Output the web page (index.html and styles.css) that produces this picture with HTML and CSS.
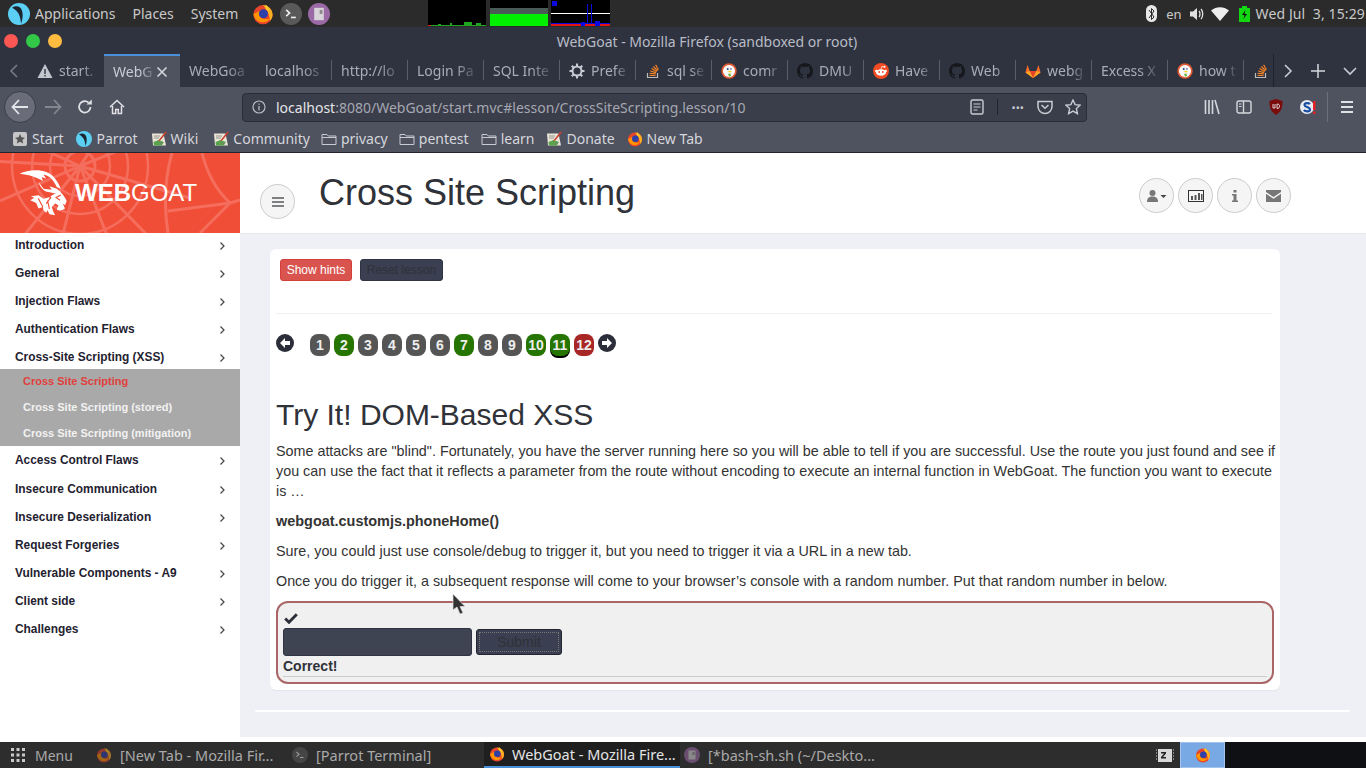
FILE: index.html
```html
<!DOCTYPE html>
<html lang="en">
<head>
    <meta charset="UTF-8">
    <title>WebGoat - Mozilla Firefox</title>
    <link rel="stylesheet" href="styles.css">
</head>
<body>
    <!-- shared icons -->
    <svg class="defs" width="0" height="0">
        <symbol id="i-firefox" viewBox="0 0 16 16">
            <circle cx="8" cy="8.5" r="7" fill="#e8452c"/>
            <path d="M8 1.5a7 7 0 0 1 7 7c0 2-1 3.500-2 4.500 0-5-3-9-5-11.500z" fill="#ffb01f"/>
            <path d="M1 8c1 4 4 6.500 8 6 2-.3 3-1.500 4-3-2 1-5 1-6.500-.5S5 6 7 5z" fill="#ff9500"/>
            <circle cx="8.300" cy="7.800" r="3.300" fill="#2d3fa8"/>
            <path d="M10 1c1 1 2.500 3 3 5l-3-1.500z" fill="#ffcb2e"/>
        </symbol>
        <symbol id="i-parrot" viewBox="0 0 16 16">
            <circle cx="8" cy="8" r="8" fill="#5bd0f4"/>
            <path d="M3 3.500C6 1.500 9 2.500 10 5c1 2.500 1 6-.5 10C9 10 8 6 3 3.500z" fill="#1c2530"/>
        </symbol>
        <symbol id="i-terminal" viewBox="0 0 16 16">
            <circle cx="8" cy="8" r="8" fill="#595959"/>
            <path d="M4.500 5l2.500 2.300-2.500 2.300" fill="none" stroke="#eee" stroke-width="1.200"/>
            <path d="M8 10.500h3.500" stroke="#eee" stroke-width="1.200"/>
        </symbol>
        <symbol id="i-notes" viewBox="0 0 16 16">
            <circle cx="8" cy="8" r="8" fill="#9b6aa6"/>
            <path d="M4.500 3.500h7v9h-7z" fill="#d9d3da"/>
            <path d="M8.500 5h2v3h-2z" fill="#8d8a90"/>
        </symbol>
        <symbol id="i-duck" viewBox="0 0 16 16">
            <circle cx="8" cy="8" r="7.700" fill="#de5833"/>
            <circle cx="8" cy="8" r="6" fill="#fff"/>
            <path d="M5.500 3.500c2-1 4-.5 4.500 1.500l.5 4 .5 4.500-3 1-1-5z" fill="#f4f1ec"/>
            <circle cx="6.700" cy="6" r="1" fill="#2d4f8e"/>
            <circle cx="10" cy="6" r=".8" fill="#2d4f8e"/>
            <path d="M6.500 8h4.500l-2 1.500z" fill="#fdd20a"/>
            <path d="M7 11l2.500-.5.5 2.500-2 .5z" fill="#65bc46"/>
        </symbol>
        <symbol id="i-github" viewBox="0 0 16 16">
            <path fill="#16181d" d="M8 0C3.580 0 0 3.580 0 8c0 3.540 2.290 6.530 5.470 7.590.4.070.55-.17.55-.38 0-.19-.01-.82-.01-1.490-2.010.37-2.530-.49-2.690-.94-.09-.23-.48-.94-.82-1.130-.28-.15-.68-.52-.01-.53.63-.01 1.080.58 1.230.82.720 1.210 1.870.87 2.330.66.070-.52.28-.87.51-1.070-1.780-.2-3.640-.89-3.640-3.950 0-.87.31-1.590.82-2.150-.08-.2-.36-1.020.08-2.120 0 0 .67-.21 2.200.82.64-.18 1.320-.27 2-.27.68 0 1.360.09 2 .27 1.530-1.040 2.200-.82 2.200-.82.44 1.100.16 1.920.08 2.120.51.56.82 1.270.82 2.150 0 3.070-1.870 3.750-3.650 3.950.29.25.54.73.54 1.480 0 1.070-.01 1.930-.01 2.200 0 .21.15.46.55.38A8.013 8.013 0 0016 8c0-4.420-3.580-8-8-8z"/>
        </symbol>
        <symbol id="i-reddit" viewBox="0 0 16 16">
            <circle cx="8" cy="8" r="8" fill="#f04b23"/>
            <ellipse cx="8" cy="9.500" rx="5" ry="3.300" fill="#fff"/>
            <circle cx="3.300" cy="8" r="1.200" fill="#fff"/>
            <circle cx="12.700" cy="8" r="1.200" fill="#fff"/>
            <circle cx="11.500" cy="3.800" r="1" fill="#fff"/>
            <path d="M8 6.500l.8-3 2.500.4" fill="none" stroke="#fff" stroke-width=".7"/>
            <circle cx="6.200" cy="9" r=".9" fill="#f04b23"/>
            <circle cx="9.800" cy="9" r=".9" fill="#f04b23"/>
        </symbol>
        <symbol id="i-gitlab" viewBox="0 0 16 16">
            <path d="M8 15L.500 9.500 2.500 2l2.200 6h6.600l2.200-6 2 7.500z" fill="#fc6d26"/>
            <path d="M8 15L4.700 8h6.600z" fill="#e24329"/>
            <path d="M8 15L.500 9.500 4.700 8zM8 15l7.500-5.500L11.300 8z" fill="#fca326"/>
        </symbol>
        <symbol id="i-stack" viewBox="0 0 16 16">
            <path d="M2.500 10v4.500h10V10" fill="none" stroke="#bcbbbb" stroke-width="1.200"/>
            <path d="M4.500 12.500h6M4.700 10.300l6 .6M5.300 8l5.800 1.600M6.500 5.600l5.200 3M8.300 3.500l4.300 4.200M10.600 1.700l2.800 5" fill="none" stroke="#f48024" stroke-width="1.200"/>
        </symbol>
        <symbol id="i-wiki" viewBox="0 0 16 16">
            <path d="M1 2.500h11.500l2.500 12H2z" fill="#e9e6d8"/>
            <path d="M2.500 11l5-2 5.500 2-2.500 3.500H3z" fill="#58a34b"/>
            <path d="M3 5h6M3 7h5M9 12l3 1" stroke="#7b7b7b" stroke-width=".8"/>
            <path d="M14.500 .5L8.500 8l-1.500 2.500 2.500-1.300L15.800 1.500z" fill="#c8402f"/>
        </symbol>
        <symbol id="i-folder" viewBox="0 0 16 16">
            <path d="M1 3.500h5l1.300 1.500H15v8.500H1z" fill="#50535f" stroke="#c9cbd2" stroke-width="1"/>
            <path d="M1 6.500h14" stroke="#c9cbd2" stroke-width="1"/>
        </symbol>
        <symbol id="i-chev" viewBox="0 0 8 10">
            <path d="M2.500 1.500L6 5 2.500 8.500" fill="none" stroke="#444" stroke-width="1.200"/>
        </symbol>
    </svg>

    <!-- desktop top panel -->
    <div class="panel">
        <svg class="panel-logo"><use href="#i-parrot"/></svg>
        <span class="panel-item">Applications</span>
        <span class="panel-item">Places</span>
        <span class="panel-item">System</span>
        <svg class="launcher launcher-first"><use href="#i-firefox"/></svg>
        <svg class="launcher"><use href="#i-terminal"/></svg>
        <svg class="launcher"><use href="#i-notes"/></svg>
        <div class="monitors">
            <svg class="monitor" viewBox="0 0 58 26">
                <rect width="58" height="26" fill="#000"/>
                <path d="M0 25h58v1H0zM10 24h3v1h-3zM22 23h2v2h-2zM36 22h8v3h-8zM48 23h5v2h-5z" fill="#1fa51f"/>
                <path d="M0 25h3v1H0z" fill="#d22"/>
            </svg>
            <svg class="monitor monitor-mem" viewBox="0 0 58 26">
                <rect width="58" height="26" fill="#000"/>
                <rect y="8" width="58" height="6" fill="#4a5a56"/>
                <rect y="14" width="58" height="12" fill="#00f000"/>
            </svg>
            <svg class="monitor monitor-net" viewBox="0 0 59 26">
                <rect width="59" height="26" fill="#000"/>
                <rect x="1" y="1" width="5" height="5" fill="#0a0adf"/>
                <rect y="13" width="59" height="1" fill="#fff"/>
                <path d="M36 4h1v19h-1zM40 4h1v19h-1zM0 23h59v1H0z" fill="#0a0adf"/>
                <rect y="24" width="59" height="2" fill="#e01414"/>
                <path d="M30 22h4v4h-4zM44 21h5v5h-5z" fill="#0a0adf"/>
            </svg>
        </div>
        <div class="panel-right">
            <svg class="tray" width="12" height="18" viewBox="0 0 12 18">
                <rect width="11" height="17" rx="5.500" fill="#e8e8e8"/>
                <path d="M3 5l5 7-2.500 2.500v-11L8 6l-5 7" fill="none" stroke="#2b2b2b"/>
            </svg>
            <span class="tray-text">en</span>
            <svg class="tray" width="16" height="16" viewBox="0 0 16 16">
                <path d="M1 5.500h3L8 2v12l-4-3.500H1z" fill="#e2e2e2"/>
                <path d="M10 5c1.300 1.500 1.300 4.500 0 6M12 3c2.300 2.500 2.300 7.500 0 10" fill="none" stroke="#e2e2e2" stroke-width="1.300"/>
            </svg>
            <svg class="tray tray-wifi" width="18" height="14" viewBox="0 0 18 14">
                <path d="M0 3.500C5-1 13-1 18 3.500L9 14z" fill="#eee"/>
            </svg>
            <svg class="tray tray-batt" width="11" height="16" viewBox="0 0 11 16">
                <path d="M3 0h5v2h3v14H0V2h3z" fill="#12d812"/>
                <path d="M6.500 4L3 9h2.500l-1 4L8 8H5.500z" fill="#111"/>
            </svg>
            <span class="clock">Wed Jul &nbsp;3, 15:29</span>
        </div>
    </div>

    <!-- firefox chrome -->
    <div class="titlebar">
        <span class="wm-dot wm-red"></span>
        <span class="wm-dot wm-green"></span>
        <span class="wm-dot wm-yellow"></span>
        <span class="window-title">WebGoat - Mozilla Firefox (sandboxed or root)</span>
    </div>

    <div class="tabbar">
        <span class="tab-arrow">
            <svg width="10" height="14" viewBox="0 0 10 14"><path d="M8 1L2 7l6 6" fill="none" stroke="#777b88" stroke-width="1.600"/></svg>
        </span>
        <div class="tab tab-first">
            <svg class="tab-icon" viewBox="0 0 16 16"><path d="M8 1l7.500 14H.5z" fill="#c4c6cd"/><path d="M7.300 6h1.400v5H7.300zM7.300 12h1.400v1.400H7.300z" fill="#2f3340"/></svg>
            <span class="tab-label">start.</span>
        </div>
        <div class="tab tab-active">
            <span class="tab-label">WebG</span>
            <svg class="tab-close" width="12" height="12" viewBox="0 0 12 12"><path d="M1.500 1.500l9 9M10.500 1.500l-9 9" stroke="#d5d7dc" stroke-width="1.600"/></svg>
        </div>
        <div class="tab tab-noline"><span class="tab-label">WebGoa</span></div>
        <div class="tab"><span class="tab-label">localhos</span></div>
        <div class="tab"><span class="tab-label">http://lo</span></div>
        <div class="tab"><span class="tab-label">Login Pa</span></div>
        <div class="tab"><span class="tab-label">SQL Inte</span></div>
        <div class="tab">
            <svg class="tab-icon" viewBox="0 0 16 16"><circle cx="8" cy="8" r="4.500" fill="none" stroke="#c9cbd2" stroke-width="2"/><path d="M8 .5v3M8 12.500v3M.5 8h3M12.500 8h3M2.700 2.700l2.100 2.100M11.200 11.200l2.100 2.100M13.300 2.700l-2.100 2.100M4.800 11.200l-2.100 2.100" stroke="#c9cbd2" stroke-width="2"/></svg>
            <span class="tab-label">Prefe</span>
        </div>
        <div class="tab"><svg class="tab-icon"><use href="#i-stack"/></svg><span class="tab-label">sql se</span></div>
        <div class="tab"><svg class="tab-icon"><use href="#i-duck"/></svg><span class="tab-label">comr</span></div>
        <div class="tab"><svg class="tab-icon"><use href="#i-github"/></svg><span class="tab-label">DMU</span></div>
        <div class="tab"><svg class="tab-icon"><use href="#i-reddit"/></svg><span class="tab-label">Have</span></div>
        <div class="tab"><svg class="tab-icon"><use href="#i-github"/></svg><span class="tab-label">Web</span></div>
        <div class="tab"><svg class="tab-icon"><use href="#i-gitlab"/></svg><span class="tab-label">webg</span></div>
        <div class="tab"><span class="tab-label">Excess X</span></div>
        <div class="tab"><svg class="tab-icon"><use href="#i-duck"/></svg><span class="tab-label">how t</span></div>
        <div class="tab tab-cut"><svg class="tab-icon"><use href="#i-stack"/></svg></div>
        <div class="tab-tools">
            <svg width="10" height="14" viewBox="0 0 10 14"><path d="M2 1l6 6-6 6" fill="none" stroke="#c9cbd2" stroke-width="1.600"/></svg>
            <svg width="14" height="14" viewBox="0 0 14 14"><path d="M7 0v14M0 7h14" stroke="#d5d7dc" stroke-width="1.500"/></svg>
            <svg width="14" height="10" viewBox="0 0 14 10"><path d="M1 2l6 6 6-6" fill="none" stroke="#c9cbd2" stroke-width="1.600"/></svg>
        </div>
    </div>

    <div class="navbar">
        <span class="back-btn">
            <svg width="18" height="16" viewBox="0 0 18 16"><path d="M8 1L1.500 8 8 15M2 8h15" fill="none" stroke="#e4e5e8" stroke-width="1.800"/></svg>
        </span>
        <svg class="nav-icon nav-forward" width="18" height="16" viewBox="0 0 18 16"><path d="M10 1l6.500 7L10 15M16 8H1" fill="none" stroke="#84868f" stroke-width="1.800"/></svg>
        <svg class="nav-icon nav-reload" width="16" height="16" viewBox="0 0 16 16"><path d="M13.500 8A5.700 5.700 0 1 1 11.500 3.500" fill="none" stroke="#e0e1e5" stroke-width="1.800"/><path d="M9.500 5.500h5.300V.5z" fill="#e0e1e5"/></svg>
        <svg class="nav-icon nav-home" width="16" height="16" viewBox="0 0 16 16"><path d="M1 8l7-6.500L15 8M3.500 7v7.500h3.200v-4h2.600v4h3.200V7" fill="none" stroke="#e0e1e5" stroke-width="1.500"/></svg>
        <div class="urlbar">
            <svg class="url-info" width="14" height="14" viewBox="0 0 14 14"><circle cx="7" cy="7" r="6" fill="none" stroke="#b9bbc2" stroke-width="1.200"/><path d="M7 6v4.500M7 3.500v1.300" stroke="#b9bbc2" stroke-width="1.300"/></svg>
            <span class="url"><b>localhost</b>:8080/WebGoat/start.mvc#lesson/CrossSiteScripting.lesson/10</span>
            <svg class="url-tool" width="14" height="16" viewBox="0 0 14 16"><rect x="1" y="1" width="12" height="14" rx="1.500" fill="none" stroke="#c9cbd2" stroke-width="1.400"/><path d="M3.500 5h7M3.500 8h7M3.500 11h4" stroke="#c9cbd2" stroke-width="1.200"/></svg>
            <span class="url-sep"></span>
            <span class="url-dots">•••</span>
            <svg class="url-tool" width="16" height="16" viewBox="0 0 16 16"><path d="M1 2.500h14v5a7 7 0 0 1-14 0z" fill="none" stroke="#c9cbd2" stroke-width="1.500"/><path d="M4.500 6l3.500 3.300L11.500 6" fill="none" stroke="#c9cbd2" stroke-width="1.500"/></svg>
            <svg class="url-tool" width="16" height="16" viewBox="0 0 16 16"><path d="M8 1l2.100 4.600 5 .6-3.700 3.400 1 5L8 12.100 3.600 14.600l1-5L.9 6.200l5-.6z" fill="none" stroke="#c9cbd2" stroke-width="1.400"/></svg>
        </div>
        <div class="nav-right">
            <svg width="16" height="16" viewBox="0 0 16 16"><path d="M1.500 1v14M5 1v14M8.500 1v14M11 1l4 14" stroke="#d5d7dc" stroke-width="1.600"/></svg>
            <svg width="16" height="16" viewBox="0 0 16 16"><rect x="1" y="2" width="14" height="12" rx="2" fill="none" stroke="#d5d7dc" stroke-width="1.400"/><path d="M7.500 2v12" stroke="#d5d7dc" stroke-width="1.400"/><path d="M3 5h2.500M3 7.500h2.500" stroke="#d5d7dc"/></svg>
            <svg width="16" height="16" viewBox="0 0 16 16"><path d="M8 0l6.500 2c.3 6.500-1.500 11-6.500 14C3 13 1.200 8.500 1.500 2z" fill="#7a0c0c"/><path d="M5 5v4h2V5M9 5v4.500c2 0 2.500-1 2.500-2.300S11 5 9 5z" fill="none" stroke="#e8e8e8" stroke-width=".9"/></svg>
            <svg width="16" height="16" viewBox="0 0 16 16"><circle cx="7" cy="8" r="7" fill="#e9edf3"/><path d="M10 5C8.500 3.500 4.500 3.800 4.500 6S10 8 10 10.500 5.500 13 3.800 11" fill="none" stroke="#1c4fa3" stroke-width="2.200"/><path d="M13 2h2.500v9H13zM13 12.500h2.500V15H13z" fill="#e8202a"/></svg>
            <span class="nav-sep"></span>
            <svg width="14" height="14" viewBox="0 0 14 14"><path d="M1 2h12M1 7h12M1 12h12" stroke="#e0e1e5" stroke-width="1.800"/></svg>
        </div>
    </div>

    <div class="bookmarks">
        <span class="bookmark">
            <svg class="bm-icon" viewBox="0 0 16 16"><rect x="1" y="1" width="14" height="14" rx="2" fill="#c7c7c7"/><path d="M8 3l1.500 3.300 3.500.4-2.600 2.400.8 3.500L8 10.800l-3.200 1.800.8-3.500L3 6.700l3.500-.4z" fill="#555"/></svg>Start
        </span>
        <span class="bookmark"><svg class="bm-icon"><use href="#i-parrot"/></svg>Parrot</span>
        <span class="bookmark"><svg class="bm-icon"><use href="#i-wiki"/></svg>Wiki</span>
        <span class="bookmark bm-wide"><svg class="bm-icon"><use href="#i-wiki"/></svg>Community</span>
        <span class="bookmark bm-folder"><svg class="bm-icon"><use href="#i-folder"/></svg>privacy</span>
        <span class="bookmark bm-folder"><svg class="bm-icon"><use href="#i-folder"/></svg>pentest</span>
        <span class="bookmark bm-tight"><svg class="bm-icon"><use href="#i-folder"/></svg>learn</span>
        <span class="bookmark bm-tight"><svg class="bm-icon"><use href="#i-wiki"/></svg>Donate</span>
        <span class="bookmark bm-tight"><svg class="bm-icon"><use href="#i-firefox"/></svg>New Tab</span>
    </div>

    <!-- WebGoat page -->
    <div class="page">
        <aside class="sidebar">
            <div class="brand">
                <svg class="brand-web" viewBox="0 0 240 80">
                    <g fill="none" stroke="#f56e5d">
                        <circle cx="80" cy="13" r="15" stroke-width="3"/>
                        <circle cx="80" cy="13" r="30" stroke-width="2.500"/>
                        <circle cx="80" cy="13" r="48" stroke-width="2.500"/>
                        <circle cx="80" cy="13" r="68" stroke-width="2.500"/>
                        <path stroke-width="3" d="M80 13L-10 8M80 13L0 48M80 13L22 85M80 13L62 85M80 13l28 72M80 13l70 72M80 13L190 45M80 13L125-5M80 13L92-5M80 13L40-5"/>
                        <path stroke-width="3" d="M172 0c-8 28-8 55-4 80M202 0c5 20 15 38 28 50M230 50l10-3M230 50l-30 30M230 50l-62 8"/>
                    </g>
                </svg>
                <svg class="brand-goat" width="53" height="50" viewBox="20 40 160 150">
                    <path fill="#fff" d="M28 60C50 48 85 45 110 55c20 7 35 30 42 50l-12-5c-10-25-25-35-40-38l8 13-13-5 3 12-13-7C70 68 50 62 28 60z"/>
                    <path fill="#fff" d="M85 85l15 20 25 3-7-10 22 7c15 10 25 25 30 37l-5 13-7-5 7 15c-10 7-20 7-25 3l5-13-10-5-10 10 5 15 5 10-17-3-6-12-4 8-8-8-2-10-13 5-7-17-18-8 12-8-10-4 23-3 15 10 20-5c5-5 15-12 20-10l-25-5c-15 0-25-15-30-30z"/>
                    <path fill="none" stroke="#f04e37" stroke-width="3.500" d="M100 118l22 14-14 18M84 134l14 26M112 140l6 26M152 124l-14 8 12 8"/>
                </svg>
                <span class="brand-name"><b>WEB</b>GOAT</span>
            </div>
            <nav class="menu">
                <a class="menu-item menu-first">Introduction<svg class="chev"><use href="#i-chev"/></svg></a>
                <a class="menu-item">General<svg class="chev"><use href="#i-chev"/></svg></a>
                <a class="menu-item">Injection Flaws<svg class="chev"><use href="#i-chev"/></svg></a>
                <a class="menu-item">Authentication Flaws<svg class="chev"><use href="#i-chev"/></svg></a>
                <a class="menu-item menu-open">Cross-Site Scripting (XSS)<svg class="chev"><use href="#i-chev"/></svg></a>
                <div class="submenu">
                    <a class="sub-item sub-current">Cross Site Scripting</a>
                    <a class="sub-item">Cross Site Scripting (stored)</a>
                    <a class="sub-item">Cross Site Scripting (mitigation)</a>
                </div>
                <a class="menu-item menu-after">Access Control Flaws<svg class="chev"><use href="#i-chev"/></svg></a>
                <a class="menu-item">Insecure Communication<svg class="chev"><use href="#i-chev"/></svg></a>
                <a class="menu-item">Insecure Deserialization<svg class="chev"><use href="#i-chev"/></svg></a>
                <a class="menu-item">Request Forgeries<svg class="chev"><use href="#i-chev"/></svg></a>
                <a class="menu-item">Vulnerable Components - A9<svg class="chev"><use href="#i-chev"/></svg></a>
                <a class="menu-item">Client side<svg class="chev"><use href="#i-chev"/></svg></a>
                <a class="menu-item">Challenges<svg class="chev"><use href="#i-chev"/></svg></a>
            </nav>
        </aside>

        <section class="content">
            <header class="top">
                <button class="round toggle">
                    <svg width="12" height="10" viewBox="0 0 12 10"><path d="M0 1h12M0 5h12M0 9h12" stroke="#58595b" stroke-width="1.700"/></svg>
                </button>
                <h1>Cross Site Scripting</h1>
                <div class="top-actions">
                    <button class="round">
                        <svg width="20" height="12" viewBox="0 0 20 12"><circle cx="5.500" cy="3" r="3" fill="#777"/><path d="M0 12c0-4 2-5.500 5.500-5.500S11 8 11 12z" fill="#777"/><path d="M13.500 5h6l-3 3z" fill="#444"/></svg>
                    </button>
                    <button class="round">
                        <svg width="16" height="12" viewBox="0 0 16 12"><rect x=".5" y=".5" width="15" height="11" fill="none" stroke="#333"/><path d="M3 6h2v4H3zM6.500 5h2v5h-2zM10 3h2v7h-2zM13 4h1.500v6H13z" fill="#555"/></svg>
                    </button>
                    <button class="round">
                        <svg width="6" height="12" viewBox="0 0 6 12"><path d="M1.500 0h3v2.500h-3zM0 4h4.500v6.500H6V12H0v-1.500h1.500v-5H0z" fill="#777"/></svg>
                    </button>
                    <button class="round">
                        <svg width="15" height="12" viewBox="0 0 15 12"><path d="M0 0h15v2L7.500 7 0 2zM0 3.800l7.500 5 7.500-5V12H0z" fill="#777"/></svg>
                    </button>
                </div>
            </header>

            <main class="main">
                <div class="card">
                    <div class="lesson-btns">
                        <button class="btn btn-hints">Show hints</button>
                        <button class="btn btn-reset">Reset lesson</button>
                    </div>
                    <div class="pager">
                        <svg class="arrow" width="18" height="18" viewBox="0 0 18 18"><circle cx="9" cy="9" r="9" fill="#2b2e38"/><path d="M9 4L4 9l5 5V11h5V7H9z" fill="#fff"/></svg>
                        <div class="pages">
                            <span class="pg">1</span>
                            <span class="pg pg-done">2</span>
                            <span class="pg">3</span>
                            <span class="pg">4</span>
                            <span class="pg">5</span>
                            <span class="pg">6</span>
                            <span class="pg pg-done">7</span>
                            <span class="pg">8</span>
                            <span class="pg">9</span>
                            <span class="pg pg-done">10</span>
                            <span class="pg pg-done pg-current">11</span>
                            <span class="pg pg-fail">12</span>
                        </div>
                        <svg class="arrow arrow-next" width="18" height="18" viewBox="0 0 18 18"><circle cx="9" cy="9" r="9" fill="#2b2e38"/><path d="M9 4l5 5-5 5V11H4V7h5z" fill="#fff"/></svg>
                    </div>

                    <h2>Try It! DOM-Based XSS</h2>
                    <p>Some attacks are "blind". Fortunately, you have the server running here so you will be able to tell if you are successful. Use the route you just found and see if you can use the fact that it reflects a parameter from the route without encoding to execute an internal function in WebGoat. The function you want to execute is …</p>
                    <p class="fn-name"><b>webgoat.customjs.phoneHome()</b></p>
                    <p>Sure, you could just use console/debug to trigger it, but you need to trigger it via a URL in a new tab.</p>
                    <p>Once you do trigger it, a subsequent response will come to your browser’s console with a random number. Put that random number in below.</p>

                    <div class="attack">
                        <svg class="check" width="14" height="11" viewBox="0 0 14 11"><path d="M1.200 5.500l3.800 3.800 7.800-8" fill="none" stroke="#2b2e38" stroke-width="2.800"/></svg>
                        <form class="attack-form">
                            <input class="answer" type="text">
                            <button class="submit" type="button"><span class="submit-focus">Submit</span></button>
                        </form>
                        <div class="feedback">Correct!</div>
                    </div>
                </div>
                <div class="page-rule"></div>
            </main>
        </section>
    </div>

    <!-- desktop taskbar -->
    <div class="taskbar">
        <svg class="menu-grid" width="14" height="14" viewBox="0 0 14 14" fill="#c9c9c9">
            <path d="M0 0h3v3H0zM5.500 0h3v3h-3zM11 0h3v3h-3zM0 5.500h3v3H0zM5.500 5.500h3v3h-3zM11 5.500h3v3h-3zM0 11h3v3H0zM5.500 11h3v3h-3zM11 11h3v3h-3z"/>
        </svg>
        <span class="task-menu">Menu</span>
        <span class="task task-ff"><svg class="task-icon dim"><use href="#i-firefox"/></svg>[New Tab - Mozilla Fir...</span>
        <span class="task task-term"><svg class="task-icon dim"><use href="#i-terminal"/></svg>[Parrot Terminal]</span>
        <span class="task task-active"><svg class="task-icon"><use href="#i-firefox"/></svg>WebGoat - Mozilla Fire...</span>
        <span class="task task-notes"><svg class="task-icon dim"><use href="#i-notes"/></svg>[*bash-sh.sh (~/Deskto...</span>
        <svg class="sleep" width="18" height="18" viewBox="0 0 18 18"><rect x="2" y="3" width="14" height="13" fill="#d8d8d8"/><path d="M0 3v12M18 3v12" stroke="#d8d8d8" stroke-dasharray="2 1"/><path d="M5 6h5v1.500L7 11h3v1.500H5V11l3-3.500H5z" fill="#222"/></svg>
        <span class="show-ff"><svg class="task-icon"><use href="#i-firefox"/></svg></span>
        <span class="task-end"></span>
    </div>

    <!-- mouse pointer -->
    <svg class="pointer" width="14" height="22" viewBox="0 0 14 22">
        <path d="M1 1v16l4-3 3 7 3-1-3-6.500h5z" fill="#333" stroke="#ddd" stroke-width=".7"/>
    </svg>
</body>
</html>
```
FILE: styles.css
```css
* {
    box-sizing: border-box;
}

body {
    margin: 0;
    width: 1366px;
    height: 768px;
    overflow: hidden;
    display: flex;
    flex-direction: column;
    position: relative;
    font-family: "Liberation Sans", Arial, sans-serif;
    font-size: 14px;
    color: #333;
    background-color: #fff;
}

.defs {
    position: absolute;
}

/* Desktop top panel */
.panel {
    height: 27px;
    flex: none;
    display: flex;
    align-items: center;
    padding-left: 8px;
    background-color: #2b2b2b;
    color: #c9c9c9;
    font-family: "Noto Sans", sans-serif;
    font-size: 14px;
}

.panel-logo {
    width: 22px;
    height: 22px;
    margin-right: 5px;
}

.panel-item {
    margin-right: 17px;
}

.launcher {
    width: 22px;
    height: 22px;
    margin-right: 6px;
}

.launcher-first {
    margin-left: -3px;
}

.monitors {
    display: flex;
    gap: 4px;
    margin-left: 92px;
    align-self: flex-start;
}

.monitor {
    width: 58px;
    height: 26px;
    display: block;
}

.monitor-net {
    width: 59px;
    margin-left: -1px;
}

.panel-right {
    margin-left: auto;
    display: flex;
    align-items: center;
    padding-right: 1px;
}

.tray-text {
    margin: 0 7px 0 8px;
    font-size: 13px;
}

.tray-wifi {
    margin: 0 10px 0 6px;
}

.tray-batt {
    margin-right: 6px;
}

.clock {
    letter-spacing: .12px;
}

/* Firefox title bar and tabs */
.titlebar {
    height: 27px;
    flex: none;
    display: flex;
    align-items: center;
    gap: 8px;
    padding-left: 4px;
    position: relative;
    background-color: #2f3340;
}

.wm-dot {
    width: 14px;
    height: 14px;
    border-radius: 50%;
}

.wm-red {
    background-color: #fc5753;
}

.wm-green {
    background-color: #33c748;
}

.wm-yellow {
    background-color: #fdbc40;
}

.window-title {
    position: absolute;
    left: 48px;
    right: 0;
    top: 5px;
    text-align: center;
    color: #b9bcc6;
    font-family: "Noto Sans", sans-serif;
    font-size: 14px;
}

.tabbar {
    height: 33px;
    flex: none;
    display: flex;
    align-items: stretch;
    background-color: #2f3340;
    color: #a9acb7;
    font-family: "Noto Sans", sans-serif;
    font-size: 14px;
}

.tab-arrow {
    width: 28px;
    display: flex;
    align-items: center;
    justify-content: center;
}

.tab {
    width: 76px;
    flex: none;
    display: flex;
    align-items: center;
    padding: 0 8px 0 9px;
    position: relative;
    overflow: hidden;
}

.tab::after {
    content: "";
    position: absolute;
    right: 0;
    top: 6px;
    bottom: 7px;
    width: 1px;
    background-color: #5b5e6a;
}

.tab-first::after,
.tab-active::after,
.tab-noline::after {
    display: none;
}

.tab-active {
    background-color: #4f525f;
    border-top: 2px solid #4a90d9;
    padding-right: 12px;
    color: #c9ccd4;
}

.tab-cut {
    width: 30px;
    padding-left: 9px;
    border-right: 1px solid #1f222b;
}

.tab-cut::after {
    display: none;
}

.tab-icon {
    width: 16px;
    height: 16px;
    flex: none;
    margin-right: 6px;
}

.tab-label {
    flex: 1;
    overflow: hidden;
    white-space: nowrap;
    -webkit-mask-image: linear-gradient(to right, #000 65%, rgba(0, 0, 0, .15));
    mask-image: linear-gradient(to right, #000 65%, rgba(0, 0, 0, .15));
}

.tab-close {
    flex: none;
    margin-left: 2px;
}

.tab-tools {
    flex: 1;
    display: flex;
    align-items: center;
    gap: 18px;
    padding-left: 9px;
}

/* Navigation bar */
.navbar {
    height: 40px;
    flex: none;
    display: flex;
    align-items: center;
    padding: 0 0 0 4px;
    background-color: #4f525f;
}

.back-btn {
    width: 32px;
    height: 32px;
    flex: none;
    border-radius: 50%;
    background-color: #6a6d79;
    border: 1px solid #3a3d49;
    display: flex;
    align-items: center;
    justify-content: center;
}

.nav-forward {
    margin-left: 8px;
}

.nav-reload {
    margin-left: 15px;
}

.nav-home {
    margin-left: 16px;
}

.urlbar {
    width: 845px;
    height: 29px;
    margin-left: 117px;
    display: flex;
    align-items: center;
    padding: 0 5px 0 9px;
    background-color: #3a3d4a;
    border: 1px solid #2a2c36;
    border-radius: 4px;
    color: #a6a8b1;
    font-family: "Noto Sans", sans-serif;
    font-size: 14px;
}

.url {
    flex: 1;
    margin-left: 10px;
}

.url b {
    font-weight: normal;
    color: #e4e5e8;
}

.url-tool {
    flex: none;
    margin-left: 12px;
}

.url-sep {
    width: 1px;
    height: 16px;
    margin-left: 13px;
    background-color: #23252e;
}

.url-dots {
    margin-left: 14px;
    font-size: 11px;
    color: #c9cbd2;
}

.url-dots + .url-tool {
    margin-left: 13px;
}

.nav-right {
    flex: 1;
    display: flex;
    align-items: center;
    gap: 16px;
    padding-left: 117px;
}

.nav-sep {
    width: 1px;
    height: 30px;
    margin-left: -5px;
    margin-right: -4px;
    background-color: #6c6f7b;
}

/* Bookmarks */
.bookmarks {
    height: 26px;
    flex: none;
    display: flex;
    align-items: center;
    gap: 13px;
    padding: 0 0 2px 12px;
    background-color: #4f525f;
    border-bottom: 1px solid #23252e;
    color: #d5d7dc;
    font-family: "Noto Sans", sans-serif;
    font-size: 14px;
}

.bookmark {
    display: flex;
    align-items: center;
    gap: 4px;
}

.bm-wide {
    margin-left: 2px;
}

.bm-folder {
    margin-left: -2px;
}

.bm-tight {
    margin-left: -1px;
}

.bm-icon {
    width: 16px;
    height: 16px;
}

/* WebGoat page */
.page {
    flex: 1;
    min-height: 0;
    display: flex;
    background-color: #fff;
}

.sidebar {
    width: 240px;
    flex: none;
}

.brand {
    height: 80px;
    display: flex;
    align-items: center;
    position: relative;
    padding-left: 17px;
    background-color: #f04e37;
    overflow: hidden;
}

.brand-web {
    position: absolute;
    left: 0;
    top: 0;
    width: 240px;
    height: 80px;
}

.brand-goat {
    position: relative;
    margin-top: -3px;
}

.brand-name {
    position: relative;
    margin-left: 5px;
    color: #fff;
    font-size: 24px;
}

.menu-item {
    height: 28px;
    display: flex;
    align-items: center;
    justify-content: space-between;
    padding: 0 14px 0 15px;
    font-size: 11.9px;
    font-weight: bold;
    color: #1f2230;
}

.menu-first {
    height: 26px;
    padding-bottom: 2px;
}

.menu-open {
    height: 26px;
    padding-top: 2px;
}

.menu-after {
    height: 29px;
    padding-bottom: 2px;
}

.chev {
    width: 8px;
    height: 10px;
    margin-top: 2px;
}

.submenu {
    height: 77px;
    background-color: #a9a9a9;
}

.sub-item {
    display: flex;
    align-items: center;
    height: 26px;
    padding: 0 0 2px 23px;
    font-size: 11px;
    font-weight: bold;
    color: #f2f2f2;
}

.sub-current {
    color: #e0403c;
}

.content {
    flex: 1;
    min-width: 0;
    display: flex;
    flex-direction: column;
    margin-bottom: 5px;
    background-color: #eff0f6;
}

.top {
    height: 81px;
    flex: none;
    display: flex;
    align-items: flex-start;
    padding-left: 20px;
    background-color: #fff;
    border-bottom: 1px solid #e6e7ec;
}

.round {
    width: 35px;
    height: 35px;
    padding: 0;
    display: flex;
    align-items: center;
    justify-content: center;
    background-color: #f5f5f5;
    border: 1px solid #ccc;
    border-radius: 50%;
}

.toggle {
    margin-top: 31px;
}

h1 {
    margin: 18px 0 0 24px;
    font-size: 36px;
    font-weight: normal;
    line-height: 44px;
    color: #2f3238;
}

.top-actions {
    margin-left: auto;
    margin-right: 75px;
    margin-top: 25px;
    display: flex;
    gap: 4px;
}

.main {
    flex: 1;
    padding: 15px 16px 0 15px;
}

.card {
    width: 1010px;
    height: 441px;
    margin-left: 15px;
    padding: 10px 6px 0 6px;
    background-color: #fff;
    border-radius: 6px;
    box-shadow: 0 1px 1px rgba(0, 0, 0, .05);
}

.lesson-btns {
    display: flex;
    gap: 8px;
    height: 55px;
    padding-left: 4px;
    border-bottom: 1px solid #f0f0f2;
    margin-right: 2px;
}

.btn {
    height: 22px;
    padding: 0 5px;
    font-family: "Liberation Sans", Arial, sans-serif;
    font-size: 12px;
    border-radius: 3px;
}

.btn-hints {
    width: 72px;
    background-color: #d9534f;
    border: 1px solid #d43f3a;
    color: #fff;
}

.btn-reset {
    width: 83px;
    background-color: #3a3f51;
    border: 1px solid #2f3342;
    color: #2f3238;
}

.pager {
    display: flex;
    align-items: flex-start;
    margin-top: 20px;
    height: 22px;
}

.arrow {
    flex: none;
}

.pages {
    display: flex;
    gap: 4px;
    margin-left: 16px;
}

.arrow-next {
    margin-left: 4px;
}

.pg {
    width: 20px;
    height: 22px;
    display: flex;
    align-items: center;
    justify-content: center;
    border-radius: 8px;
    background-color: #555;
    color: #eee;
    font-size: 14px;
    font-weight: bold;
}

.pg-done {
    background-color: #267500;
}

.pg-fail {
    background-color: #a82626;
}

.pg-current {
    box-shadow: 0 2px 0 #000;
}

h2 {
    margin: 42px 0 10px;
    font-size: 30px;
    font-weight: normal;
    line-height: 33px;
    color: #2f3238;
}

p {
    margin: 0 -4px 10px 0;
    font-size: 14.33px;
    line-height: 20px;
    color: #333;
}

.fn-name {
    font-size: 14.45px;
}

.attack {
    height: 83px;
    padding: 10px 5px 0 5px;
    background-color: #f0f0f0;
    border: 2px solid #a66;
    border-radius: 12px;
}

.check {
    display: block;
    margin-left: 1px;
}

.attack-form {
    display: flex;
    align-items: center;
    gap: 4px;
    margin-top: 4px;
}

.answer {
    width: 189px;
    height: 28px;
    background-color: #3f4453;
    border: 1px solid #2f3342;
    border-radius: 3px;
}

.submit {
    width: 86px;
    height: 26px;
    padding: 2px;
    background-color: #3a3f51;
    border: 1px solid #23262f;
    border-radius: 3px;
    font-family: "Liberation Sans", Arial, sans-serif;
    font-size: 14px;
    color: #2f3238;
}

.submit-focus {
    display: flex;
    align-items: center;
    justify-content: center;
    height: 100%;
    border: 1px dotted #777;
}

.feedback {
    height: 21px;
    line-height: 20px;
    font-weight: bold;
    color: #2f3238;
    border-bottom: 1px solid #ccc;
}

.page-rule {
    height: 2px;
    margin-top: 20px;
    border-radius: 1px;
    background-color: #fff;
}

/* Desktop taskbar */
.taskbar {
    height: 26px;
    flex: none;
    display: flex;
    align-items: center;
    background-color: #2d2d2d;
    color: #a9a9a9;
    font-family: "Noto Sans", sans-serif;
    font-size: 14.5px;
}

.menu-grid {
    margin-left: 11px;
}

.task-menu {
    margin-left: 10px;
    width: 61px;
    font-size: 14px;
}

.task {
    height: 100%;
    display: flex;
    align-items: center;
    gap: 8px;
    white-space: nowrap;
}

.task-ff {
    width: 196px;
}

.task-term {
    width: 192px;
}

.task-active {
    width: 196px;
    padding-left: 5px;
    gap: 7px;
    background-color: #1f1f1f;
    border-bottom: 2px solid #4a90d9;
    color: #e4e4e4;
}

.task-notes {
    width: 478px;
    padding-left: 4px;
}

.task-icon {
    width: 16px;
    height: 16px;
    flex: none;
}

.dim {
    opacity: .55;
}

.sleep {
    margin-left: -2px;
    margin-right: 6px;
    flex: none;
}

.show-ff {
    width: 45px;
    height: 100%;
    flex: none;
    display: flex;
    align-items: center;
    justify-content: center;
    background-color: #78a9e4;
    border: 1px solid #a2c4ee;
}

.task-end {
    flex: 1;
    height: 100%;
    background-color: #0e1014;
}

.pointer {
    position: absolute;
    left: 452px;
    top: 593px;
}
```
